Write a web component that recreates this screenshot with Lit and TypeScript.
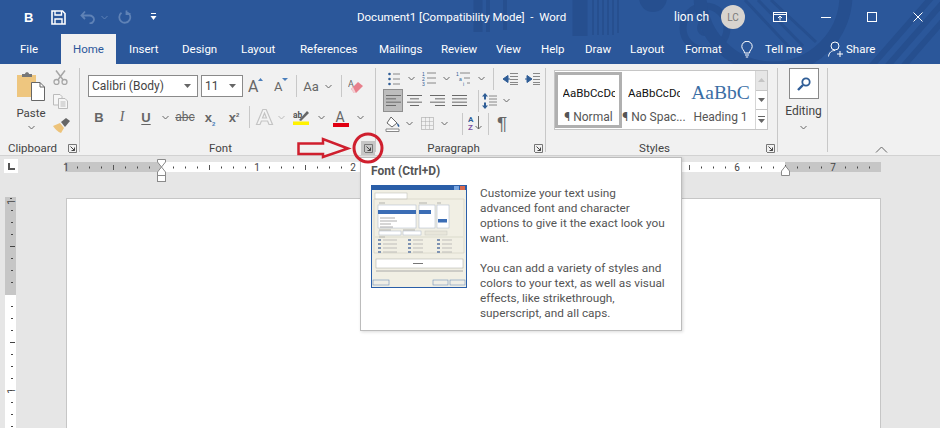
import { LitElement, css, html, svg } from "lit";
import { customElement } from "lit/decorators.js";

const caret = (c = "#666") => html`<svg width="7" height="5" viewBox="0 0 7 5"><path d="M.5 1 3.500 4 6.500 1" fill="none" stroke=${c} stroke-width="1"/></svg>`;
const sep = html`<i class="vsep"></i>`;

const launcher = html`<svg width="9" height="9" viewBox="0 0 9 9"><path d="M.5 8V.5H8.500V8.500H1" fill="none" stroke="#777"/><path d="M2.500 2.500 6.500 6.500M6.500 3.500V6.500H3.500" fill="none" stroke="#444"/></svg>`;

const listLines = (ys: number[], x1: number, x2: number, c = "#888") =>
  ys.map((y) => svg`<path d="M${x1} ${y}H${x2}" stroke=${c}/>`);

const alignIcon = (rows: number[][]) => html`<svg width="15" height="11" viewBox="0 0 15 11">
  ${rows.map((r, i) => svg`<path d="M${r[0]} ${i * 3.33 + 0.5}H${r[1]}" stroke="#6a6a6a"/>`)}
</svg>`;

type Cell = [number, unknown];
const row = (cells: Cell[]) =>
  cells.map(([w, c]) => html`<span class="cell" style="width:${w}px">${c}</span>`);

const fontRow1: Cell[] = [
  [27, html`<svg width="18" height="19" viewBox="0 0 18 19"><text x="0" y="15" class="svgA" font-size="16" fill="#666">A</text><path d="M10 4 12.500 1 15 4Z" fill="#4a7ebb"/></svg>`],
  [22, html`<svg width="16" height="17" viewBox="0 0 16 17"><text x="1" y="13" class="svgA" font-size="13" fill="#666">A</text><path d="M9 0H15L12 3Z" fill="#4a7ebb"/></svg>`],
  [8, sep],
  [22, html`<span class="aa">Aa</span>`],
  [12, caret()],
  [14, sep],
  [16, html`<svg width="16" height="16" viewBox="0 0 16 16"><text x="0" y="9" class="svgA" font-size="9" fill="#666">A</text><path d="M3 11 10 4 15 8 8 15H6Z" fill="#e8808c"/><path d="M3 11 6 15H8L5 9Z" fill="#f3d0d4"/></svg>`],
];

const fontRow2: Cell[] = [
  [22, html`<b class="fmt">B</b>`],
  [24, html`<i class="fmt serif">I</i>`],
  [24, html`<span class="fmt under">U</span>`],
  [14, caret()],
  [26, html`<span class="strike">abc</span>`],
  [24, html`<span class="fmt">x<sub>2</sub></span>`],
  [24, html`<span class="fmt">x<sup>2</sup></span>`],
  [6, sep],
  [24, html`<svg width="19" height="18" viewBox="0 0 19 18"><path d="M1.500 16.500 7.800 1.500H11.200L17.500 16.500H14L12.600 13H6.400L5 16.500ZM7.500 10H11.500L9.500 5Z" fill="#f4f4f4" stroke="#c4c4c4" stroke-width="1.200"/></svg>`],
  [10, caret("#bbb")],
  [30, html`<svg width="17" height="16" viewBox="0 0 17 16"><text x="0" y="8.500" font-size="8.500" class="svgA" font-weight="700" fill="#555">ab</text><path d="M6 11 14 2 16 4 8 12Z" fill="#666"/><rect x="0" y="12.500" width="16" height="3.500" fill="#fff200"/></svg>`],
  [10, caret()],
  [29, html`<svg width="16" height="20" viewBox="0 -4 16 20"><text x="2.500" y="11" font-size="14" class="svgA" fill="#666">A</text><rect y="12" width="16" height="4" fill="#e00012"/></svg>`],
  [10, caret()],
];

const paraRow1: Cell[] = [
  [22, html`<svg width="12" height="14" viewBox="0 0 12 14"><g fill="#2f5d96"><circle cx="1.500" cy="2" r="1.300"/><circle cx="1.500" cy="7" r="1.300"/><circle cx="1.500" cy="12" r="1.300"/></g>${listLines([2, 7, 12], 5, 12)}</svg>`],
  [13, caret()],
  [22, html`<svg width="14" height="16" viewBox="0 0 14 16"><text x="0" y="5" class="tiny">1</text><text x="0" y="10" class="tiny">2</text><text x="0" y="14.500" class="tiny">3</text>${listLines([2, 7, 12], 5, 14)}</svg>`],
  [13, caret()],
  [22, html`<svg width="16" height="16" viewBox="0 0 16 16"><text x="0" y="5" class="tiny">1</text><text x="3" y="10" class="tiny">a</text><text x="7" y="14.500" class="tiny">i</text>${listLines([2], 4, 14)}${listLines([7], 8, 14)}${listLines([12], 11, 14)}</svg>`],
  [12, caret()],
  [12, sep],
  [22, html`<svg width="15" height="12" viewBox="0 0 15 12"><path d="M0 6 5 2.500V9.500ZM4 6H7" fill="#2f5d96" stroke="#2f5d96"/>${listLines([.5, 3.500, 6.500, 9.500, 11.500], 7, 15)}</svg>`],
  [22, html`<svg width="15" height="12" viewBox="0 0 15 12"><path d="M7 6 2 2.500V9.500ZM0 6H3" fill="#2f5d96" stroke="#2f5d96"/>${listLines([.5, 3.500, 6.500, 9.500, 11.500], 8, 15)}</svg>`],
];

const paraRow2: Cell[] = [
  [20, html`<span class="selected">${alignIcon([[0, 15], [0, 10], [0, 15], [0, 10]])}</span>`],
  [23, alignIcon([[0, 15], [3, 12], [0, 15], [3, 12]])],
  [23, alignIcon([[0, 15], [5, 15], [0, 15], [5, 15]])],
  [21, alignIcon([[0, 15], [0, 15], [0, 15], [0, 15]])],
  [7, ""],
  [2, sep],
  [21, html`<svg width="15" height="16" viewBox="0 0 15 16"><path d="M3 0 6 3.500H4V6.500H2V3.500H0ZM3 16 0 12.500H2V9.500H4V12.500H6Z" fill="#2f5d96"/>${listLines([3, 6, 9, 12], 7, 15)}</svg>`],
  [12, caret()],
];

const paraRow3: Cell[] = [
  [20, html`<svg width="16" height="16" viewBox="0 0 16 16"><path d="M6 1 12 7 7 11 2 7Z" fill="#fff" stroke="#666"/><path d="M12 7C14 8 15 10 14 11 13 11 12 9 12 7Z" fill="#2f5d96"/><path d="M1 13H14V15.500H1Z" fill="#fff" stroke="#888"/></svg>`],
  [13, caret()],
  [22, html`<svg width="13" height="13" viewBox="0 0 13 13"><rect x=".5" y=".5" width="12" height="12" fill="none" stroke="#999" stroke-dasharray="1 1"/><path d="M.5 4.500H12.500M.5 8.500H12.500M4.500 .5V12.500M8.500 .5V12.500" stroke="#aaa" stroke-dasharray="1 1"/></svg>`],
  [13, caret()],
  [10, ""],
  [2, sep],
  [24, html`<svg width="14" height="17" viewBox="0 0 14 17"><text x="0" y="7" font-size="8" font-weight="700" class="svgA" fill="#2f5d96">A</text><text x="0" y="15" font-size="8" font-weight="700" class="svgA" fill="#7b4fa3">Z</text><path d="M10.500 1V14M7.500 11 10.500 14 13.500 11" fill="none" stroke="#666"/></svg>`],
  [2, sep],
  [26, html`<span class="pilcrow">¶</span>`],
];

const tabs: [string, number][] = [
  ["Insert", 53],
  ["Design", 59],
  ["Layout", 59],
  ["References", 79],
  ["Mailings", 62],
  ["Review", 55],
  ["View", 45],
  ["Help", 44],
  ["Draw", 45],
  ["Layout", 55],
  ["Format", 56],
];

const rulerTicks = (from: number, to: number, zero: number) => {
  const out: unknown[] = [];
  for (let x = from; x <= to; x += 12) {
    const n = Math.round((x - zero) / 12);
    if (n % 8 === 0) continue;
    if (n % 4 === 0) out.push(svg`<path d="M${x + 0.5} 3V8" stroke="#555"/>`);
    else out.push(svg`<path d="M${x + 0.5} 4.500V6.500" stroke="#444"/>`);
  }
  return out;
};

const vTicks = () => {
  const out: unknown[] = [];
  for (let y = 198; y <= 428; y += 12) {
    const n = Math.round((y - 294) / 12);
    const at = y - 196.5;
    if (n % 8 === 0) {
      if (n !== 0) out.push(svg`<path d="M5 ${at}H7" stroke="#444"/>`);
      continue;
    }
    if (n % 4 === 0) out.push(svg`<path d="M5 ${at}H10" stroke="#444"/>`);
    else out.push(svg`<path d="M6 ${at}H8" stroke="#444"/>`);
  }
  return out;
};

@customElement("app-root")
export class AppRoot extends LitElement {
  static styles = css`
    :host {
      display: block;
      width: 940px;
      height: 428px;
      overflow: hidden;
      position: relative;
      font-family: Roboto, "Open Sans", sans-serif;
      font-size: 11.5px;
      color: #444;
      background: #e6e6e6;
    }
    .header {
      background: #2b579a;
      height: 64px;
      position: relative;
      color: #fff;
    }
    .pattern {
      position: absolute;
      inset: 0;
    }
    .titlebar {
      position: relative;
      height: 34px;
      display: flex;
      align-items: center;
    }
    .qat {
      width: 357px;
      flex: none;
      display: flex;
      align-items: center;
      padding-left: 24px;
      box-sizing: border-box;
    }
    .qat b {
      width: 27px;
      font-size: 13px;
      font-family: "Liberation Sans", sans-serif;
    }
    .qat svg {
      margin-right: 7px;
      flex: none;
    }
    .doc-title {
      width: 317px;
      flex: none;
      white-space: pre;
    }
    .user {
      width: 47px;
      flex: none;
      font-size: 12px;
    }
    .avatar {
      width: 24px;
      height: 24px;
      flex: none;
      border-radius: 50%;
      background: #d8d4cf;
      color: #7a7a7a;
      font-size: 10px;
      display: flex;
      align-items: center;
      justify-content: center;
    }
    .winbtns {
      display: flex;
      align-items: center;
      margin-left: 28px;
    }
    .winbtns span {
      width: 46px;
      display: flex;
      justify-content: flex-start;
    }
    .winbtns span:first-child {
      width: 48px;
    }
    .tabs {
      position: relative;
      height: 30px;
      display: flex;
      align-items: center;
      padding-left: 20px;
    }
    .tabs span {
      flex: none;
    }
    .tabs .file {
      width: 41px;
    }
    .tabs .home {
      background: #f1f1f1;
      color: #2b579a;
      width: 55px;
      height: 30px;
      margin-right: 13px;
      display: flex;
      align-items: center;
      justify-content: center;
    }
    .tabs .tell {
      width: 87px;
      display: flex;
      align-items: center;
      gap: 12px;
    }
    .tabs .share {
      display: flex;
      align-items: center;
      gap: 2px;
    }
    .ribbon {
      height: 92px;
      background: #f1f1f1;
      border-bottom: 1px solid #d2d2d2;
      display: flex;
      position: relative;
      box-sizing: border-box;
    }
    .group {
      display: flex;
      flex-direction: column;
      margin-top: 4px;
      background: linear-gradient(#c8c8c8, #c8c8c8) right top / 1px 84px no-repeat;
      box-sizing: border-box;
    }
    .clipboard { width: 80px; }
    .font { width: 296px; }
    .para { width: 170px; }
    .styles { width: 232px; }
    .editing { width: 50px; }
    .body {
      flex: 1;
      min-height: 0;
    }
    .label {
      height: 14px;
      display: flex;
      align-items: center;
      flex: none;
      padding-right: 1px;
    }
    .label span {
      flex: 1;
      text-align: center;
    }
    .launch {
      width: 14px;
      height: 14px;
      display: flex;
      align-items: center;
      justify-content: center;
    }
    .font .launch {
      background: #c6c6c6;
    }
    .clip-body {
      display: flex;
      padding-left: 17px;
    }
    .paste {
      width: 36px;
      display: flex;
      flex-direction: column;
      align-items: flex-start;
      padding-top: 4px;
    }
    .paste div {
      width: 28px;
      text-align: center;
      line-height: 16px;
      white-space: nowrap;
      margin-top: 4px;
      display: flex;
      flex-direction: column;
      align-items: center;
    }
    .paste svg.c {
      margin-top: 4px;
    }
    .clip-tools {
      display: flex;
      flex-direction: column;
      gap: 9px;
      padding-top: 2px;
    }
    .rows {
      display: flex;
      flex-direction: column;
    }
    .font .rows {
      padding: 7px 0 0 8px;
      gap: 9px;
    }
    .rowline {
      display: flex;
      align-items: center;
      height: 22px;
    }
    .cell {
      display: flex;
      align-items: center;
      justify-content: center;
      flex: none;
      height: 100%;
    }
    .combo {
      box-sizing: border-box;
      height: 22px;
      border: 1px solid #8a8a8a;
      background: #fff;
      display: flex;
      align-items: center;
      justify-content: space-between;
      padding: 0 6px 0 3px;
      font-size: 12px;
      color: #444;
    }
    .combo.name { width: 110px; margin-right: 3px; }
    .combo.size { width: 42px; }
    .combo svg { fill: #666; }
    .vsep {
      display: block;
      width: 1px;
      height: 22px;
      background: #c8c8c8;
    }
    .aa { font-size: 13px; color: #666; }
    .fmt {
      font-size: 13px;
      font-weight: 700;
      color: #666;
      font-family: "Liberation Sans", sans-serif;
    }
    .fmt.serif { font-family: "Liberation Serif", serif; font-size: 14px; font-weight: 400; }
    .fmt.under { text-decoration: underline; text-underline-offset: 2px; }
    .fmt sub, .fmt sup { font-size: 6px; color: #4a7ebb; line-height: 0; }
    .fmt sup { color: #666; }
    .strike { font-size: 12px; color: #666; text-decoration: line-through; }
    .svgA { font-family: Roboto, sans-serif; }
    .tiny { font: 5px "Liberation Sans", sans-serif; fill: #2f5d96; }
    .para .rows {
      padding: 0 0 0 7px;
    }
    .para .rowline:nth-child(1) { height: 21px; }
    .para .rowline:nth-child(2) { height: 23px; }
    .para .rowline:nth-child(3) { height: 23px; }
    .selected {
      width: 20px;
      height: 23px;
      background: #bdbdbd;
      border: 1px solid #8f8f8f;
      box-sizing: border-box;
      display: flex;
      align-items: center;
      justify-content: center;
    }
    .pilcrow { font-size: 19px; color: #666; line-height: 1; font-family: "Liberation Sans", sans-serif; }
    .gallery {
      margin: 2px 0 0 8px;
      width: 214px;
      height: 60px;
      border: 1px solid #c6c6c6;
      box-sizing: border-box;
      background: #fff;
      display: flex;
    }
    .style-item {
      box-sizing: border-box;
      width: 64px;
      height: 56px;
      margin-top: 1px;
      display: flex;
      flex-direction: column;
      align-items: center;
      overflow: hidden;
      white-space: nowrap;
      padding: 0 2px;
      flex: none;
    }
    .style-item.on {
      width: 67px;
      border: 3px solid #b0b0b0;
    }
    .style-item .sample {
      height: 29px;
      display: flex;
      align-items: center;
      width: 52px;
      overflow: hidden;
      font-family: Roboto, sans-serif;
      font-size: 11.500px;
      color: #111;
      justify-content: flex-start;
      margin-top: 6px;
    }
    .style-item.h .sample {
      font-family: "Liberation Serif", serif;
      font-size: 19.500px;
      color: #3a6ea5;
      width: auto;
    }
    .style-item.on .sample { margin-top: 3px; }
    .style-item .cap {
      color: #555;
      font-size: 12px;
      line-height: 15px;
      margin-top: 3px;
    }
    .style-item.h { width: 69px; }
    .scroll {
      width: 13px;
      display: flex;
      flex-direction: column;
      border-left: 1px solid #d6d6d6;
      margin-left: auto;
    }
    .scroll span {
      flex: 1;
      display: flex;
      align-items: center;
      justify-content: center;
      border-bottom: 1px solid #c6c6c6;
    }
    .scroll span:first-child { background: #e6e6e6; }
    .scroll span:last-child { border-bottom: 0; }
    .edit-body {
      display: flex;
      flex-direction: column;
      align-items: center;
      padding-left: 1px;
    }
    .find {
      width: 30px;
      height: 31px;
      border: 1px solid #8a8a8a;
      background: #fff;
      box-sizing: border-box;
      display: flex;
      align-items: center;
      justify-content: center;
    }
    .edit-body > span {
      margin-top: 4px;
      line-height: 16px;
      font-size: 12px;
    }
    .edit-body > svg { margin-top: 6px; }
    .collapse {
      position: absolute;
      left: 875px;
      top: 82px;
    }
    .rulerbar {
      height: 41px;
      position: relative;
      display: flex;
    }
    .tabsel {
      margin: 3px 0 0 4px;
      width: 14px;
      height: 14px;
      background: #fff;
      display: flex;
      align-items: center;
      justify-content: center;
    }
    .hruler {
      position: absolute;
      left: 0;
      top: 0;
    }
    .hruler text, .vruler text {
      font: 10px Roboto, sans-serif;
      fill: #444;
    }
    .work {
      display: flex;
      height: 231px;
    }
    .vruler {
      margin-left: 5px;
      width: 11px;
      flex: none;
    }
    .page {
      margin: 1px 0 0 50px;
      width: 815px;
      height: 240px;
      background: #fff;
      border: 1px solid #c6c6c6;
      box-sizing: border-box;
    }
    .tip {
      position: absolute;
      left: 360px;
      top: 157px;
      width: 322px;
      height: 174px;
      box-sizing: border-box;
      background: #fff;
      border: 1px solid #bcbcbc;
      box-shadow: 1px 1px 3px rgba(0, 0, 0, 0.15);
      padding: 5px 4px 0 10px;
      color: #555;
    }
    .tip h4 {
      margin: 0;
      font-size: 12px;
      line-height: 17px;
      font-weight: 700;
      color: #555;
    }
    .tip .tipbody {
      display: flex;
      gap: 13px;
      margin-top: 5px;
    }
    .tip p {
      margin: 0 0 15px;
      line-height: 15px;
      font-size: 11.800px;
      white-space: nowrap;
    }
    .tip svg { flex: none; }
    .tiptext { width: 195px; flex: none; padding-top: 1px; }
    .annot {
      position: absolute;
      left: 290px;
      top: 125px;
    }
  `;

  render() {
    return html`
      <div class="header">
        <svg class="pattern" width="940" height="64" viewBox="0 0 940 64">
          <g fill="none" stroke="#264f8f">
            <path d="M478 0V32" stroke-width="9"/>
            <path d="M488 0V32" stroke-width="4"/>
            <path d="M505 0V30" stroke-width="4"/>
            <path d="M580 0V36" stroke-width="15"/>
            <path d="M593 0V35M598 0V35M603 0V35M608 0V35M613 0V35M618 0V33" stroke-width="2"/>
            <circle cx="705" cy="28" r="22" stroke-width="7"/>
            <circle cx="705" cy="28" r="6" stroke-width="4"/>
            <circle cx="773" cy="-5" r="73" stroke-width="13"/>
            <path d="M745 0 790 48M758 0 803 46M771 0 816 42" stroke-width="3"/>
            <path d="M868 70 938 -10M884 70 954 -10M900 70 970 -10" stroke-width="6"/>
          </g>
          <circle cx="653" cy="-2" r="14" fill="#264f8f"/>
        </svg>
        <div class="titlebar">
          <div class="qat">
            <b>B</b>
            <svg width="15" height="15" viewBox="0 0 15 15"><path d="M1 1H11.500L14 3.500V14H1Z" fill="none" stroke="#fff" stroke-width="1.600"/><path d="M4 1V5H10.500V1M4 14V9H11V14" fill="none" stroke="#fff" stroke-width="1.400"/></svg>
            <svg style="margin-left:7px" width="15" height="14" viewBox="0 0 15 14"><path d="M1.500 5.500H9.500C12 5.500 14 7.500 14 9.500S12 13.500 9.500 13.500M5 1.500 1.500 5.500 5 9" fill="none" stroke="#5f82b6" stroke-width="1.800"/></svg>
            <svg style="margin-left:-1px;margin-right:10px" width="7" height="5" viewBox="0 0 7 5"><path d="M.5 1 3.500 4 6.500 1" fill="none" stroke="#5f82b6"/></svg>
            <svg style="margin-right:18px" width="14" height="14" viewBox="0 0 14 14"><path d="M8.500 2A5.500 5.500 0 1 1 3.500 2.800M8.500 .5V4H12.500" fill="none" stroke="#5f82b6" stroke-width="1.800"/></svg>
            <svg width="7" height="8" viewBox="0 0 7 8"><path d="M1 .5H6" stroke="#fff"/><path d="M.5 3H6.500L3.500 7Z" fill="#fff"/></svg>
          </div>
          <div class="doc-title">Document1 [Compatibility Mode]  -  Word</div>
          <div class="user">lion ch</div>
          <div class="avatar">LC</div>
          <div class="winbtns">
            <span><svg width="14" height="10" viewBox="0 0 14 10"><rect x=".5" y=".5" width="13" height="9" fill="none" stroke="#fff"/><path d="M.5 2.500H13.500M7 8.500V4M5 6 7 4 9 6" fill="none" stroke="#fff"/></svg></span>
            <span><svg width="10" height="10" viewBox="0 0 10 10"><path d="M0 5.500H10" stroke="#fff"/></svg></span>
            <span><svg width="10" height="10" viewBox="0 0 10 10"><rect x=".5" y=".5" width="9" height="9" fill="none" stroke="#fff"/></svg></span>
            <span><svg width="10" height="10" viewBox="0 0 10 10"><path d="M.5 .5 9.500 9.500M9.500 .5 .5 9.500" stroke="#fff"/></svg></span>
          </div>
        </div>
        <div class="tabs">
          <span class="file">File</span>
          <span class="home">Home</span>
          ${tabs.map(([t, w]) => html`<span style="width:${w}px">${t}</span>`)}
          <span class="tell">
            <svg width="12" height="17" viewBox="0 0 12 17"><path d="M3.500 12C3.500 9 .8 8.500 .8 5.500A5.200 5.200 0 0 1 11.200 5.500C11.200 8.500 8.500 9 8.500 12ZM4 14H8M4.800 16H7.200" fill="none" stroke="#fff"/></svg>
            Tell me
          </span>
          <span class="share">
            <svg width="16" height="16" viewBox="0 0 16 16"><circle cx="7" cy="5" r="4" fill="none" stroke="#fff"/><path d="M.5 15.500C1 11.500 3.500 9.500 7 9.500M9 13H15M12 10V16" fill="none" stroke="#fff"/></svg>
            Share
          </span>
        </div>
      </div>

      <div class="ribbon">
        <section class="group clipboard">
          <div class="body clip-body">
            <div class="paste">
              <svg width="28" height="29" viewBox="0 0 28 29"><path d="M0 3H19V25H0Z" fill="#eec67f"/><path d="M5 2H8C8 -.5 12 -.5 12 2H15V5H5Z" fill="#777"/><path d="M14.500 10.500H23L27.500 15V28.500H14.500Z" fill="#fff" stroke="#666"/><path d="M23 10.500V15H27.500" fill="none" stroke="#666"/></svg>
              <div>Paste<svg class="c" width="7" height="5" viewBox="0 0 7 5"><path d="M.5 1 3.500 4 6.500 1" fill="none" stroke="#666"/></svg></div>
            </div>
            <div class="clip-tools">
              <svg width="15" height="15" viewBox="0 0 15 15"><circle cx="3.500" cy="12" r="2.500" fill="none" stroke="#a6a6a6" stroke-width="1.300"/><circle cx="11.500" cy="12" r="2.500" fill="none" stroke="#a6a6a6" stroke-width="1.300"/><path d="M3 .5 10 9.800M12 .5 5 9.800" stroke="#a6a6a6" stroke-width="1.500"/></svg>
              <svg width="15" height="15" viewBox="0 0 15 15"><path d="M.5 .5H7L9 2.500V11H.5Z" fill="#f6f6f6" stroke="#bbb"/><path d="M5.500 4.500H12L14.500 7V14.500H5.500Z" fill="#f6f6f6" stroke="#bbb"/><path d="M7.500 8H12.500M7.500 10H12.500M7.500 12H12.500" stroke="#bbb"/></svg>
              <svg width="17" height="15" viewBox="0 0 17 15"><path d="M0 8 7 5 11 10 8 15C5 14 2 11 0 8Z" fill="#edc37a"/><path d="M8 4 13 0 17 3 12 9Z" fill="#666"/></svg>
            </div>
          </div>
          <div class="label"><span>Clipboard</span><i class="launch">${launcher}</i></div>
        </section>

        <section class="group font">
          <div class="body rows">
            <div class="rowline">
              <div class="combo name">Calibri (Body)<svg width="7" height="4"><path d="M0 0H7L3.500 4Z"/></svg></div>
              <div class="combo size">11<svg width="7" height="4"><path d="M0 0H7L3.500 4Z"/></svg></div>
              ${row(fontRow1)}
            </div>
            <div class="rowline">${row(fontRow2)}</div>
          </div>
          <div class="label"><span>Font</span><i class="launch">${launcher}</i></div>
        </section>

        <section class="group para">
          <div class="body rows">
            <div class="rowline">${row(paraRow1)}</div>
            <div class="rowline">${row(paraRow2)}</div>
            <div class="rowline">${row(paraRow3)}</div>
          </div>
          <div class="label"><span>Paragraph</span><i class="launch">${launcher}</i></div>
        </section>

        <section class="group styles">
          <div class="body">
            <div class="gallery">
              <div class="style-item on"><span class="sample">AaBbCcDc</span><span class="cap">¶ Normal</span></div>
              <div class="style-item"><span class="sample">AaBbCcDc</span><span class="cap">¶ No Spac...</span></div>
              <div class="style-item h"><span class="sample">AaBbC</span><span class="cap">Heading 1</span></div>
              <div class="scroll">
                <span><svg width="7" height="4"><path d="M0 4H7L3.500 0Z" fill="#c4c4c4"/></svg></span>
                <span><svg width="7" height="4"><path d="M0 0H7L3.500 4Z" fill="#666"/></svg></span>
                <span><svg width="7" height="7"><path d="M0 .5H7" stroke="#666"/><path d="M0 3H7L3.500 7Z" fill="#666"/></svg></span>
              </div>
            </div>
          </div>
          <div class="label"><span>Styles</span><i class="launch">${launcher}</i></div>
        </section>

        <section class="group editing">
          <div class="body edit-body">
            <div class="find"><svg width="14" height="14" viewBox="0 0 14 14"><circle cx="9" cy="5" r="3.700" fill="none" stroke="#2f5d96" stroke-width="1.800"/><path d="M6 8 1 13" stroke="#2f5d96" stroke-width="2.400"/></svg></div>
            <span>Editing</span>
            ${caret()}
          </div>
        </section>

        <svg class="collapse" width="13" height="7" viewBox="0 0 13 7"><path d="M1 6.500 6.500 1 12 6.500" fill="none" stroke="#666"/></svg>
      </div>

      <div class="rulerbar">
        <svg class="hruler" width="940" height="41" viewBox="0 0 940 41">
          <rect x="65" y="6" width="96" height="10" fill="#c6c6c6"/>
          <rect x="161" y="6" width="624" height="10" fill="#fff"/>
          <rect x="785" y="6" width="96" height="10" fill="#c6c6c6"/>
          <g transform="translate(0 6)">${rulerTicks(65, 880, 161)}</g>
          ${[[66, "1"], [257, "1"], [353, "2"], [737, "6"], [833, "7"]].map(
            ([x, t]) => svg`<text x=${x} y="15" text-anchor="middle">${t}</text>`
          )}
          <path d="M157.500 3.500H165.500V6L161.500 11 157.500 6Z" fill="#fff" stroke="#8a8a8a"/>
          <path d="M157.500 19.500V16L161.500 11 165.500 16V19.500Z" fill="#fff" stroke="#8a8a8a"/>
          <rect x="157.500" y="19.500" width="8" height="6" fill="#fff" stroke="#8a8a8a"/>
          <path d="M781.500 19.500V15L785.500 10 789.500 15V19.500Z" fill="#fff" stroke="#8a8a8a"/>
        </svg>
        <div class="tabsel"><svg width="7" height="7" viewBox="0 0 7 7"><path d="M1 0V6H7" fill="none" stroke="#555" stroke-width="2"/></svg></div>
      </div>

      <div class="work">
        <svg class="vruler" width="11" height="231" viewBox="0 0 11 231">
          <rect width="11" height="98" fill="#c6c6c6"/>
          <rect y="98" width="11" height="133" fill="#fff"/>
          ${vTicks()}
          <text transform="translate(10 5) rotate(-90)" text-anchor="middle">1</text>
          <text transform="translate(10 194) rotate(-90)" text-anchor="middle">1</text>
        </svg>
        <div class="page"></div>
      </div>

      <div class="tip">
        <h4>Font (Ctrl+D)</h4>
        <div class="tipbody">
          <svg width="96" height="103" viewBox="0 0 96 103">
            <rect width="96" height="103" fill="#2a5ea8"/>
            <rect x="1" y="5" width="94" height="97" fill="#f1efe4"/>
            <rect x="83" y="1" width="5" height="4" fill="#7aa6e0"/>
            <rect x="89" y="1" width="5" height="4" fill="#d8694e"/>
            <rect x="4" y="8" width="32" height="6" fill="#fff" stroke="#b9b9b0" stroke-width=".5"/>
            <path d="M3 14H93V68H3Z" fill="none" stroke="#c9c7ba" stroke-width=".5"/>
            <path d="M8 18H14M48 18H56M66 18H70M8 45H20M32 45H44M8 52H14" stroke="#8a8a8a" stroke-width=".6"/>
            <rect x="7" y="20" width="38" height="23" fill="#fff" stroke="#a8b4c6" stroke-width=".5"/>
            <rect x="7" y="25" width="38" height="4" fill="#3b6db5"/>
            <path d="M9 33H24M9 36H26M9 39H20M9 42H22" stroke="#8a8a8a" stroke-width=".7"/>
            <rect x="48" y="20" width="16" height="23" fill="#fff" stroke="#a8b4c6" stroke-width=".5"/>
            <rect x="48" y="25" width="12" height="4" fill="#3b6db5"/>
            <rect x="66" y="20" width="12" height="23" fill="#fff" stroke="#a8b4c6" stroke-width=".5"/>
            <rect x="67" y="34" width="9" height="3.500" fill="#3b6db5"/>
            <rect x="8" y="46" width="22" height="4" fill="#fff" stroke="#a8b4c6" stroke-width=".5"/>
            <rect x="32" y="46" width="18" height="4" fill="#fff" stroke="#a8b4c6" stroke-width=".5"/>
            <rect x="54" y="46" width="22" height="4" fill="#e8e6da" stroke="#c8c8c0" stroke-width=".5"/>
            <path d="M4 52H92" stroke="#c6c4b6" stroke-width=".5"/>
            ${[55, 59, 63, 67].map(
              (y) => svg`<path d="M7 ${y}h3M37 ${y}h3M66 ${y}h3" stroke="#7f93b2" stroke-width="2"/><path d="M12 ${y}h14M42 ${y}h10M71 ${y}h10" stroke="#aaa" stroke-width=".7"/>`
            )}
            <rect x="5" y="74" width="87" height="9" fill="#fff" stroke="#a8a8a0" stroke-width=".5"/>
            <path d="M42 78.500H52" stroke="#777"/>
            <path d="M5 86H92" stroke="#999" stroke-width=".8"/>
            <rect x="2" y="95" width="16" height="5" fill="#efeee6" stroke="#5a7fb0" stroke-width=".5"/>
            <rect x="62" y="95" width="15" height="5" fill="#efeee6" stroke="#5a7fb0" stroke-width=".5"/>
            <rect x="79" y="95" width="15" height="5" fill="#efeee6" stroke="#5a7fb0" stroke-width=".5"/>
          </svg>
          <div class="tiptext">
            <p>Customize your text using<br>advanced font and character<br>options to give it the exact look you<br>want.</p>
            <p>You can add a variety of styles and<br>colors to your text, as well as visual<br>effects, like strikethrough,<br>superscript, and all caps.</p>
          </div>
        </div>
      </div>

      <svg class="annot" width="100" height="50" viewBox="0 0 100 50">
        <path d="M8.500 18.500H33V14L58 23.500 33 32V29H8.500Z" fill="none" stroke="#cf1f2e" stroke-width="2.500"/>
        <circle cx="78" cy="23" r="14" fill="none" stroke="#cf1f2e" stroke-width="3"/>
      </svg>
    `;
  }
}
